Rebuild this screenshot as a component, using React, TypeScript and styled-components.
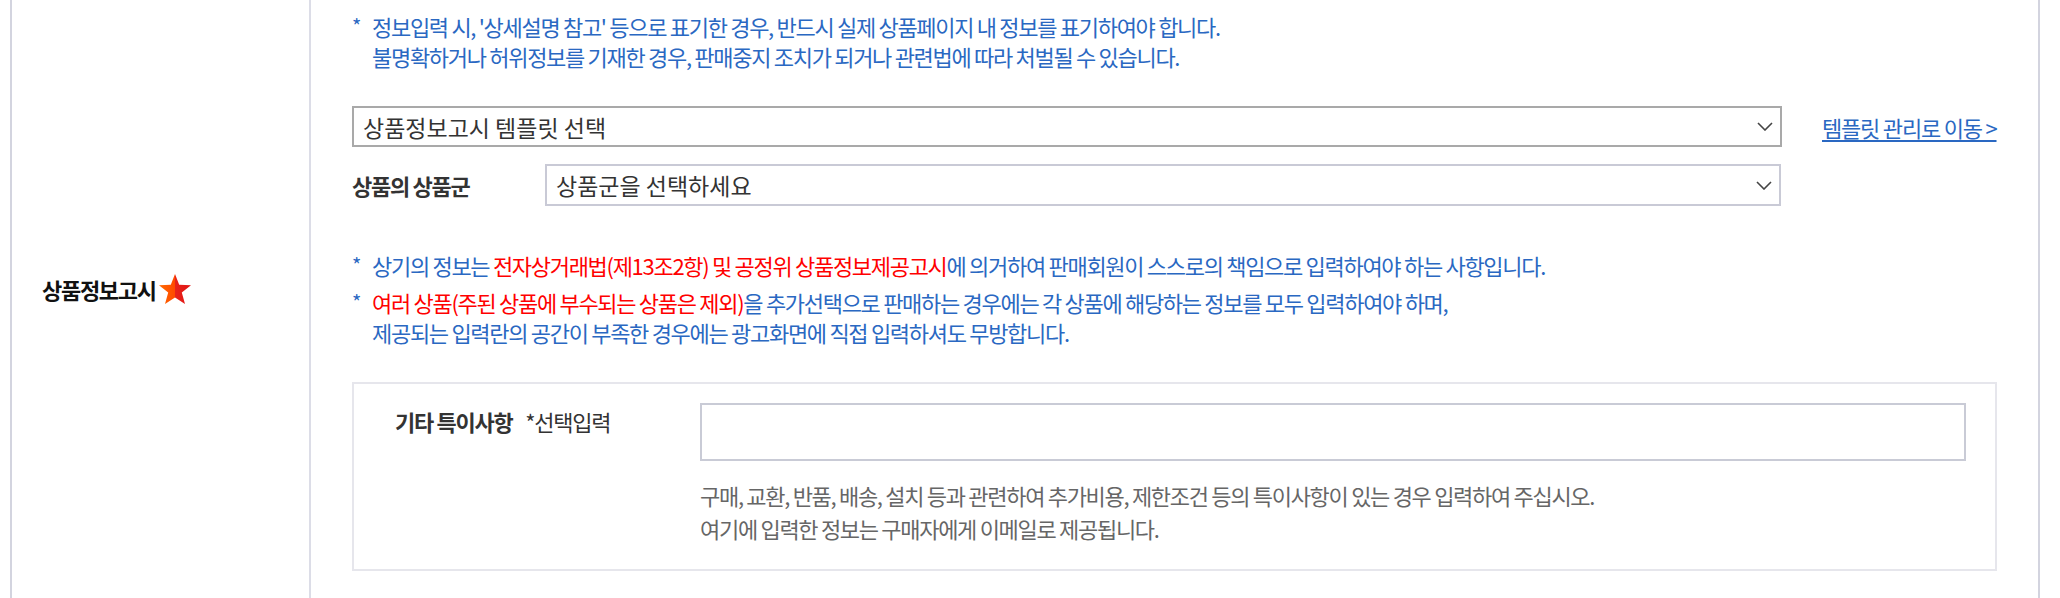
import React from "react";
import styled, { createGlobalStyle } from "styled-components";

const GlobalStyle = createGlobalStyle`
  html, body {
    margin: 0;
    padding: 0;
    background: #fff;
  }
  body {
    font-family: "Noto Sans CJK KR", "Noto Sans", sans-serif;
    color: #333;
  }
`;

const Row = styled.div`
  display: flex;
  height: 598px;
  margin: 0 20px 0 10px;
  border-left: 2px solid #d3d4df;
  border-right: 2px solid #d3d4df;
`;

const HeadCell = styled.div`
  flex: none;
  width: 299px;
  box-sizing: border-box;
  display: flex;
  align-items: center;
  padding: 0 0 20px 30px;
  border-right: 2px solid #dcdde7;
`;

const HeadLabel = styled.span`
  font-size: 22px;
  line-height: 30px;
  font-weight: 700;
  letter-spacing: -1.3px;
  color: #111;
`;

const Star = styled.svg`
  width: 34px;
  height: 32px;
  margin-left: 2px;
  flex: none;
`;

const BodyCell = styled.div`
  flex: 1;
  padding: 11px 0 0 41px;
`;

const Note = styled.div<{ $gap?: number }>`
  display: flex;
  margin-top: ${(p) => p.$gap ?? 0}px;
  font-size: 22px;
  line-height: 30px;
  letter-spacing: -1.3px;
  color: #2a68c2;
  white-space: nowrap;
`;

const Mark = styled.span`
  flex: none;
  width: 20px;
  letter-spacing: 0;
  font-size: 20px;
`;

const Red = styled.span`
  color: #ff0000;
`;

const SelectRow = styled.div<{ $gap: number }>`
  display: flex;
  align-items: center;
  margin-top: ${(p) => p.$gap}px;
`;

const FieldLabel = styled.span`
  flex: none;
  width: 193px;
  font-size: 22px;
  font-weight: 700;
  letter-spacing: -1.3px;
  color: #333;
`;

const SelectBox = styled.div<{ $width: number; $height: number; $border: string }>`
  flex: none;
  width: ${(p) => p.$width}px;
  height: ${(p) => p.$height}px;
  box-sizing: border-box;
  display: flex;
  align-items: center;
  justify-content: space-between;
  padding: 0 7px 0 9px;
  border: 2px solid ${(p) => p.$border};
  background: #fff;
  font-size: 23px;
  color: #333;
`;

const Chevron = styled.svg`
  width: 16px;
  height: 9px;
  flex: none;
`;

const MoveLink = styled.a`
  margin-left: 40px;
  font-size: 22px;
  letter-spacing: -1.2px;
  color: #2a68c2;
  text-decoration: underline;
  text-underline-offset: 3px;
  white-space: nowrap;
`;

const ExtraBox = styled.div`
  display: flex;
  width: 1645px;
  box-sizing: border-box;
  margin-top: 35px;
  padding: 19px 29px 24px 41px;
  border: 2px solid #e6e6ec;
`;

const ExtraHead = styled.div`
  flex: none;
  width: 305px;
  margin-top: 3px;
  font-size: 22px;
  line-height: 30px;
  letter-spacing: -1.3px;
  white-space: nowrap;
`;

const ExtraTitle = styled.span`
  font-weight: 700;
  color: #333;
  margin-right: 13px;
`;

const Optional = styled.span`
  color: #333;
`;

const ExtraField = styled.div`
  flex: 1;
`;

const TextInput = styled.input`
  display: block;
  width: 100%;
  height: 58px;
  box-sizing: border-box;
  border: 2px solid #c9cbd6;
  outline: none;
  padding: 0 10px;
  font-size: 22px;
  font-family: inherit;
`;

const Help = styled.p`
  margin: 18px 0 0;
  font-size: 22px;
  line-height: 33px;
  letter-spacing: -1.3px;
  color: #666;
  white-space: nowrap;
`;

const ArrowDown = () => (
  <Chevron viewBox="0 0 16 9">
    <polyline points="1,1 8,8 15,1" fill="none" stroke="#444" strokeWidth="1.6" />
  </Chevron>
);

export default function App() {
  return (
    <>
      <GlobalStyle />
      <Row>
        <HeadCell>
          <HeadLabel>상품정보고시</HeadLabel>
          <Star viewBox="0 0 34 32">
            <defs>
              <linearGradient id="starFill" x1="0" y1="0" x2="1" y2="0">
                <stop offset="0" stopColor="#ff6a00" />
                <stop offset="0.5" stopColor="#ff4a00" />
                <stop offset="0.5" stopColor="#e8231a" />
                <stop offset="1" stopColor="#e01414" />
              </linearGradient>
            </defs>
            <polygon
              points="17,1 21.2,11.8 33,12.3 23.8,19.6 27,31 17,24.5 7,31 10.2,19.6 1,12.3 12.8,11.8"
              fill="url(#starFill)"
            />
          </Star>
        </HeadCell>
        <BodyCell>
          <Note>
            <Mark>*</Mark>
            <span>
              정보입력 시, '상세설명 참고' 등으로 표기한 경우, 반드시 실제 상품페이지 내 정보를 표기하여야 합니다.
              <br />
              불명확하거나 허위정보를 기재한 경우, 판매중지 조치가 되거나 관련법에 따라 처벌될 수 있습니다.
            </span>
          </Note>

          <SelectRow $gap={35}>
            <SelectBox $width={1430} $height={41} $border="#a9a9a9">
              <span>상품정보고시 템플릿 선택</span>
              <ArrowDown />
            </SelectBox>
            <MoveLink href="#">템플릿 관리로 이동 &gt;</MoveLink>
          </SelectRow>

          <SelectRow $gap={17}>
            <FieldLabel>상품의 상품군</FieldLabel>
            <SelectBox $width={1236} $height={42} $border="#c9cad6">
              <span>상품군을 선택하세요</span>
              <ArrowDown />
            </SelectBox>
          </SelectRow>

          <Note $gap={44}>
            <Mark>*</Mark>
            <span>
              상기의 정보는 <Red>전자상거래법(제13조2항) 및 공정위 상품정보제공고시</Red>에 의거하여 판매회원이 스스로의 책임으로
              입력하여야 하는 사항입니다.
            </span>
          </Note>
          <Note $gap={7}>
            <Mark>*</Mark>
            <span>
              <Red>여러 상품(주된 상품에 부수되는 상품은 제외)</Red>을 추가선택으로 판매하는 경우에는 각 상품에 해당하는 정보를 모두
              입력하여야 하며,
              <br />
              제공되는 입력란의 공간이 부족한 경우에는 광고화면에 직접 입력하셔도 무방합니다.
            </span>
          </Note>

          <ExtraBox>
            <ExtraHead>
              <ExtraTitle>기타 특이사항</ExtraTitle>
              <Optional>*선택입력</Optional>
            </ExtraHead>
            <ExtraField>
              <TextInput type="text" />
              <Help>
                구매, 교환, 반품, 배송, 설치 등과 관련하여 추가비용, 제한조건 등의 특이사항이 있는 경우 입력하여 주십시오.
                <br />
                여기에 입력한 정보는 구매자에게 이메일로 제공됩니다.
              </Help>
            </ExtraField>
          </ExtraBox>
        </BodyCell>
      </Row>
    </>
  );
}
